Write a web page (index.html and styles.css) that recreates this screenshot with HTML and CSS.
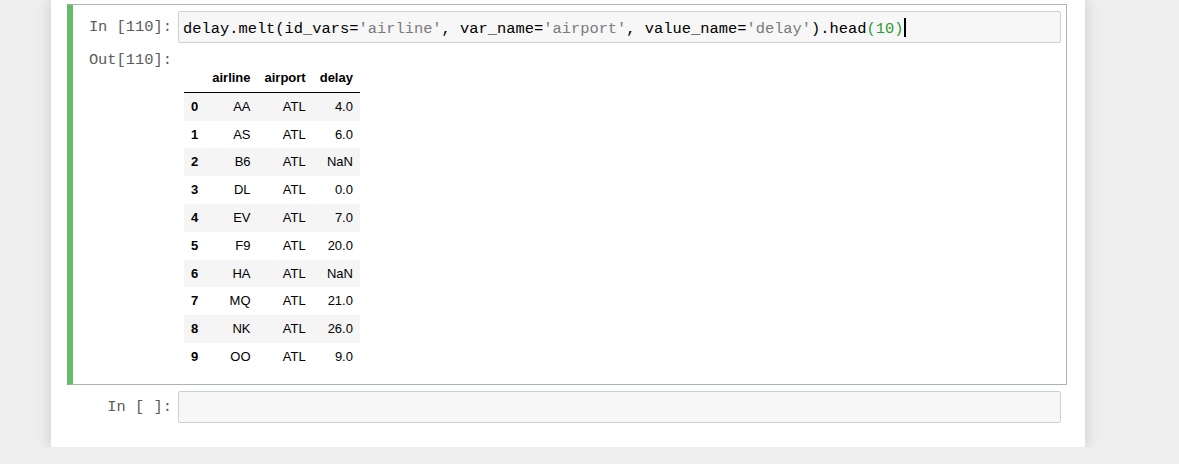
FILE: index.html
```html
<!DOCTYPE html>
<html>
<head>
<meta charset="utf-8">
<link rel="stylesheet" href="styles.css">
</head>
<body>
<div class="notebook">
  <div class="cell selected">
    <div class="input-row">
      <div class="prompt in-prompt">In&nbsp;[110]:</div>
      <div class="input-area"><pre class="code">delay.melt(id_vars=<span class="str">'airline'</span>, var_name=<span class="str">'airport'</span>, value_name=<span class="str">'delay'</span>).head<span class="num">(10)</span><span class="cursor"></span></pre></div>
    </div>
    <div class="output-row">
      <div class="prompt out-prompt">Out[110]:</div>
      <div class="output-area">
        <table class="dataframe">
          <thead>
            <tr><th></th><th>airline</th><th>airport</th><th>delay</th></tr>
          </thead>
          <tbody>
            <tr><th>0</th><td>AA</td><td>ATL</td><td>4.0</td></tr>
            <tr><th>1</th><td>AS</td><td>ATL</td><td>6.0</td></tr>
            <tr><th>2</th><td>B6</td><td>ATL</td><td>NaN</td></tr>
            <tr><th>3</th><td>DL</td><td>ATL</td><td>0.0</td></tr>
            <tr><th>4</th><td>EV</td><td>ATL</td><td>7.0</td></tr>
            <tr><th>5</th><td>F9</td><td>ATL</td><td>20.0</td></tr>
            <tr><th>6</th><td>HA</td><td>ATL</td><td>NaN</td></tr>
            <tr><th>7</th><td>MQ</td><td>ATL</td><td>21.0</td></tr>
            <tr><th>8</th><td>NK</td><td>ATL</td><td>26.0</td></tr>
            <tr><th>9</th><td>OO</td><td>ATL</td><td>9.0</td></tr>
          </tbody>
        </table>
      </div>
    </div>
  </div>
  <div class="cell empty">
    <div class="input-row">
      <div class="prompt in-prompt">In&nbsp;[&nbsp;]:</div>
      <div class="input-area"><pre class="code"> </pre></div>
    </div>
  </div>
</div>
</body>
</html>
```
FILE: styles.css
```css
html, body {
  margin: 0;
  padding: 0;
  background: #eeeeee;
  font-family: "Liberation Sans", Arial, sans-serif;
}

.notebook {
  box-sizing: border-box;
  width: 1034px;
  margin-left: 51px;
  padding: 4px 18px 18px 16px;
  background: #ffffff;
  box-shadow: 0 0 12px 1px rgba(87, 87, 87, 0.2);
}

.cell {
  display: flex;
  flex-direction: column;
  border: 1px solid transparent;
  border-left: 6px solid transparent;
  padding: 6px 5px 0 0;
}

.cell.selected {
  border-color: #a9b9a9;
  border-left-color: #66bb6a;
}

.cell.empty {
  padding-top: 5px;
  padding-bottom: 5px;
}

.input-row,
.output-row {
  display: flex;
  align-items: flex-start;
}

.prompt {
  flex: none;
  box-sizing: border-box;
  width: 105px;
  padding-right: 6px;
  text-align: right;
  font-family: "Liberation Mono", "Courier New", monospace;
  font-size: 15.4px;
  line-height: 18px;
  color: #5c5c5c;
  white-space: nowrap;
}

.in-prompt {
  padding-top: 7px;
}

.input-area {
  flex: 1;
  box-sizing: border-box;
  height: 32px;
  padding: 6px 4px;
  background: #f7f7f7;
  border: 1px solid #cfcfcf;
  border-radius: 2px;
}

.code {
  margin: 0;
  font-family: "Liberation Mono", "Courier New", monospace;
  font-size: 15.4px;
  line-height: 18px;
  color: #000000;
  white-space: pre;
}

.str {
  color: #7b7b7b;
}

.num {
  color: #2f9a35;
}

.cursor {
  display: inline-block;
  width: 0;
  height: 19px;
  border-left: 2px solid #000;
  margin-left: 1px;
  vertical-align: -4px;
}

.output-row {
  padding-top: 8px;
}

.output-area {
  flex: 1;
  padding: 13px 0 13px 6px;
}

.dataframe {
  border-collapse: collapse;
  border-spacing: 0;
  font-family: "Liberation Sans", Arial, sans-serif;
  font-size: 13px;
  line-height: 15.8px;
  color: #000;
}

.dataframe th,
.dataframe td {
  padding: 6px 7px;
  text-align: right;
  white-space: nowrap;
}

.dataframe th {
  font-weight: bold;
}

.dataframe tbody th {
  text-align: left;
}

.dataframe thead th {
  border-bottom: 1px solid #000;
}

.dataframe tbody tr:nth-child(odd) {
  background: #f5f5f5;
}
```
